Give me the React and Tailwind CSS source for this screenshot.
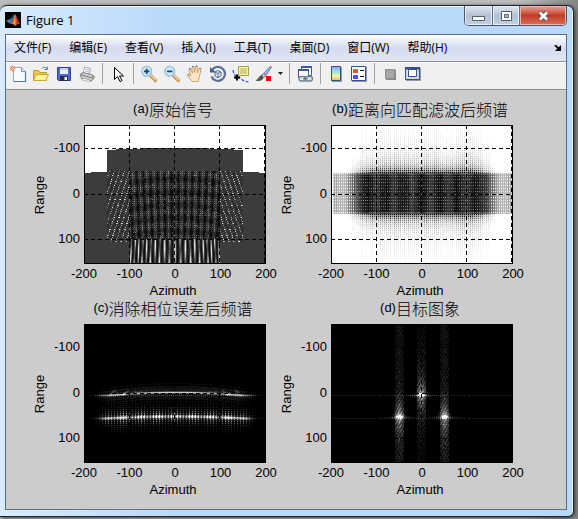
import React from 'react';

// Plot raster size
const W = 182;
const H = 139;

const noise = (x, y) => {
    const n = Math.sin(x * 12.9898 + y * 78.233) * 43758.5453;
    return n - Math.floor(n);
};

const gauss = (d, s) => Math.exp(-(d * d) / (2 * s * s));

const clamp = (v) => Math.max(0, Math.min(255, v));

// (a) raw signal: three overlapping echoes
const rawSignal = (x, y) => {
    const d = x - 90.5;
    const ad = Math.abs(d);
    const center = ad < 68;
    const inner = ad < 45;
    const top = center ? 23 + Math.round((ad * ad) / 2300) : 47 + (ad > 84 ? 1 : 0);
    if (y < top) return 255;
    if (inner && y >= 114) {
        const phase = 1.15 * ad + 0.007 * d * d - (y - 114) * 0.0022 * ad;
        const beat = 0.5 + 0.5 * Math.cos((y - 128) * 0.16 + ad * 0.7);
        const s = Math.pow(0.5 + 0.5 * Math.cos(phase), 2);
        return clamp(22 + s * (60 + 150 * beat));
    }
    if (inner && y >= 46) {
        const col = Math.cos(d * 0.92 + (y - 70) * d * 0.0012);
        const row = Math.cos((y - 60 - (d * d) / 500) * 0.48);
        const dot = x % 2 === 0 && y % 2 === 0 ? 1 : 0;
        return clamp(36 + 18 * col + 4 * row + dot * (24 + 34 * row + 24 * col) + (noise(x, y) > 0.97 ? 60 : 0));
    }
    if (center && y >= 46 && y < 117) {
        const slope = Math.cos(ad * 1.25 - y * 0.42);
        const dot = y % 2 === 0 && slope > 0.7;
        return dot ? 70 + 165 * noise(x, y) : 40 + 36 * noise(y, x) * (y % 2);
    }
    return 60;
};

// (b) spectrum after range matched filtering
const rangeFiltered = (x, y) => {
    const ad = Math.abs(x - 91);
    if (ad > 89) return 255;
    const core = ad < 62 ? 1 : Math.max(0.38, 1 - (ad - 62) / 24);
    const streak = 0.25 + 0.75 * noise(x, 3);
    if (y >= 48 && y < 89) {
        const hole = x % 2 === 0 && y % 3 === 0;
        const col = 0.82 + 0.06 * Math.cos(x * 0.35) + 0.06 * noise(x, 1);
        const shade = core * col;
        const edge = y < 50 || y > 86 ? 0.85 : 1;
        if (hole) return clamp(255 - shade * (ad > 68 ? 30 : 130 + 80 * noise(x, y)));
        return clamp(255 - 255 * shade * edge * (ad > 66 && x % 2 === 0 ? 0.75 : 1));
    }
    const dist = y < 48 ? 48 - y : y - 88;
    const side = ad < 50 ? 1 : Math.max(0, 1 - (ad - 50) / 24);
    const near = 200 * Math.exp(-dist / 4.5) * side;
    const far = 74 * Math.exp(-dist / 20) * side * streak;
    const mask = x % 2 === 0 || y % 2 === 0 ? 0.6 : 1.3;
    return clamp(255 - (near + far * (x % 2 ? 1.4 : 0.4)) * mask);
};

// (c) spectrum after phase error correction
const phaseCorrected = (x, y) => {
    const d = x - 91;
    const ad = Math.abs(d);
    const curve = (ad * ad) / 1500;
    const fade = ad < 62 ? 1 : Math.max(0, 1 - (ad - 62) / 20);
    const arc = y - (68 + Math.min(3, curve));
    const line = y - (92 + Math.min(2, curve * 0.6));
    const tail = ad < 88 && x % 2 ? 34 : 0;
    let v = (ad < 35 || ad > 50 ? 170 : 110) * gauss(arc, 0.7) * fade + 14 * gauss(arc, 4) * fade;
    v += tail * gauss(y - 71, 0.4) + tail * gauss(y - 94, 0.4);
    // side lobes
    const ripple = 0.5 + 0.5 * Math.cos(arc * 2.1 - curve * 1.4);
    v += 28 * gauss(arc, 6) * ripple * fade * (x % 2 ? 1 : 0.3);
    if (ad > 28 && ad < 68) v += 65 * gauss(arc + 2 + Math.cos(ad * 0.42) * 2, 0.9) * (0.5 + 0.5 * Math.cos(ad * 0.5));
    // vertical comb around the lower echo
    const comb = x % 3 === 0 ? 1 : 0.2;
    const lump = 0.55 + 0.45 * Math.cos(ad * 0.36);
    v += (120 + 100 * lump) * gauss(line, 0.9) * fade * (x % 3 === 1 && ad < 50 ? 0.55 : 1);
    v += 140 * gauss(line, 4) * comb * fade * (0.35 + 0.65 * lump) * (y % 2 ? 1 : 0.75);
    v += 75 * gauss(line, 8) * comb * fade * (0.4 + 0.6 * noise(x, 9)) * (y % 2);
    return clamp(v);
};

// (d) focused target image
const targets = [
    { x: 68, y: 92, up: 16, down: 26, floor: 32, power: 125 },
    { x: 90, y: 70, up: 24, down: 22, floor: 12, power: 125 },
    { x: 113, y: 92, up: 16, down: 26, floor: 32, power: 125 },
];

const focusedImage = (x, y) => {
    let v = 0;
    targets.forEach((t) => {
        const dx = Math.abs(x - t.x);
        const dy = y - t.y;
        const decay = Math.exp(-Math.abs(dy) / (dy < 0 ? t.up : t.down));
        if (dx < 5) {
            const weave = 0.3 + 0.7 * (0.5 + 0.5 * Math.cos((x - t.x) * 2.1 + dy * 1.1));
            v += (t.floor + t.power * decay) * weave * (0.3 + 0.9 * noise(x, y)) * (1 - dx / 10);
        }
        v += 60 * gauss(dx, 2.5) * gauss(dy, 9);
        v += 170 * gauss(dx, 2) * gauss(dy, 1) + 45 * gauss(dx, 4) * gauss(dy, 2.5);
        v += 120 * Math.exp(-dx / 7) * gauss(dy - 1, 0.7) * (x % 2 ? 1 : 0.5);
    });
    if ((y === 71 || y === 94) && x % 2) v += 40;
    return clamp(v);
};

// Horizontal runs of equal grey are merged into one path per level
const rasterize = (fn, base) => {
    const step = 15;
    const levels = {};
    for (let y = 0; y < H; y++) {
        let x = 0;
        while (x < W) {
            const g = Math.round(fn(x, y) / step) * step;
            let run = 1;
            while (x + run < W && Math.round(fn(x + run, y) / step) * step === g) run++;
            if (g !== base) levels[g] = (levels[g] || '') + `M${x} ${y}h${run}v1h-${run}z`;
            x += run;
        }
    }
    return Object.entries(levels);
};

const plots = [
    { id: 'a', title: '原始信号', base: 255, data: rasterize(rawSignal, 255) },
    { id: 'b', title: '距离向匹配滤波后频谱', base: 255, data: rasterize(rangeFiltered, 255) },
    { id: 'c', title: '消除相位误差后频谱', base: 0, data: rasterize(phaseCorrected, 0) },
    { id: 'd', title: '目标图象', base: 0, data: rasterize(focusedImage, 0) },
];

const Plot = ({ plot }) => (
    <figure className="grid grid-cols-[12px_38px_1fr] grid-rows-[25px_auto_20px_15px] text-[13px] leading-[14px] text-black">
        <figcaption className="col-start-3 flex h-[18px] items-center justify-center whitespace-nowrap pr-1">
            <span>({plot.id})</span>
            <span className="font-['Noto_Sans_CJK_SC',sans-serif] text-base font-light leading-[18px]">{plot.title}</span>
        </figcaption>
        <div className="col-start-1 row-start-2 flex items-center justify-center">
            <span className="-rotate-90">Range</span>
        </div>
        <div className="col-start-2 row-start-2 flex flex-col justify-between pr-1 pt-[23px] pb-[25px] text-right">
            {['-100', '0', '100'].map((t) => (
                <span key={t} className="flex h-0 items-center justify-end">{t}</span>
            ))}
        </div>
        <svg viewBox="0 0 182 139" className="col-start-3 row-start-2 block w-full" shapeRendering="crispEdges">
            <rect width="182" height="139" fill={plot.base ? '#fff' : '#000'} />
            {plot.data.map(([g, d]) => (
                <path key={g} d={d} fill={`rgb(${g},${g},${g})`} />
            ))}
            <path
                d="M45.5 0V139M90.5 0V139M135.5 0V139M180.5 0V139M0 23.5H182M0 69.5H182M0 114.5H182"
                stroke="#000"
                strokeDasharray="4 3"
                fill="none"
            />
            <rect x="0.5" y="0.5" width="181" height="138" fill="none" stroke="#000" />
        </svg>
        <div className="col-start-3 row-start-3 flex items-center justify-between">
            {['-200', '-100', '0', '100', '200'].map((t) => (
                <span key={t} className="flex w-0 justify-center">{t}</span>
            ))}
        </div>
        <div className="col-start-3 row-start-4 flex items-start justify-center pr-1">Azimuth</div>
    </figure>
);

const Icon = ({ children }) => (
    <svg viewBox="0 0 18 18" className="h-[18px] w-[18px]" fill="none">{children}</svg>
);

const Lens = ({ plus }) => (
    <Icon>
        <path d="M10.5 10.5l5 5" stroke="#c98a42" strokeWidth="3.2" strokeLinecap="round" />
        <path d="M10.8 10.2l4.8 4.8" stroke="#f9d6a4" strokeWidth="1.5" strokeLinecap="round" />
        <circle cx="6.7" cy="6.3" r="4.9" fill="#c9ecfb" stroke="#9dbde0" strokeWidth="1.4" />
        <path d={plus ? 'M4 6.4h5.4M6.7 3.7v5.4' : 'M4 6.4h5.4'} stroke="#16457f" strokeWidth="1.7" />
    </Icon>
);

const icons = {
    new: (
        <Icon>
            <path d="M4.5 2.5h8l4 4v10h-12z" fill="#f5faff" stroke="#8fabd0" />
            <path d="M16.5 6.5v10h-12" stroke="#54779f" strokeWidth="1.2" />
            <path d="M12.5 2.5v4h4" fill="#cfe0f3" stroke="#7f9cc4" />
            <path d="M3.5 .5v6M.5 3.5h6M1.3 1.3l4.4 4.4M5.7 1.3L1.3 5.7" stroke="#e8957a" />
            <circle cx="3.5" cy="3.5" r="1.6" fill="#fff0b0" stroke="#dc6a46" />
        </Icon>
    ),
    open: (
        <Icon>
            <path d="M10 3.5c1.5-2 4-1.5 5 .5M15.4 1.6v2.9h-2.9" stroke="#5578aa" />
            <path d="M1.5 15.5v-10h5l1.5 2h6.5v8z" fill="#ecc654" stroke="#c39a34" />
            <path d="M1.5 15.5l3-6h12l-2.5 6z" fill="#fff19a" stroke="#cda63a" />
        </Icon>
    ),
    save: (
        <Icon>
            <path d="M2.5 2.5h13v13h-12l-1-1z" fill="#5468c6" stroke="#2e4190" />
            <path d="M5 3h8v6H5z" fill="#e8effc" />
            <path d="M5 3h8v2H5z" fill="#c3d0f2" />
            <path d="M5 11h8v5H5z" fill="#262c54" />
            <path d="M9.5 12h2.5v3H9.5z" fill="#f4f6ff" />
        </Icon>
    ),
    print: (
        <Icon>
            <path d="M5 8l1.5-6 6 1.5L11.5 9z" fill="#fafcff" stroke="#a4abb8" />
            <path d="M7.5 4l4 1M7 6l4 1" stroke="#a8bad4" />
            <path d="M2 9.5l3-2 10 2.5 1.5 2.5-3 3.5-10-2.5z" fill="#d0d0d0" stroke="#8a8a8a" />
            <path d="M2 9.5l10.5 3 4-1M3 13l10 3" stroke="#777" />
            <path d="M5 13l7 2-1.5 1.5-6.5-1.5z" fill="#f8f8f8" stroke="#999" strokeWidth=".7" />
            <path d="M13.5 13.5l1.5-.5" stroke="#79ae54" strokeWidth="1.4" />
        </Icon>
    ),
    pointer: (
        <Icon>
            <path d="M5.5 2.5v12l3-3 2.5 5 2-1-2.5-4.5h4z" fill="#fff" stroke="#000" />
        </Icon>
    ),
    zoomIn: <Lens plus />,
    zoomOut: <Lens />,
    pan: (
        <Icon>
            <path
                d="M6 16.5c-1-2-3.5-4-4.5-6 .3-1.3 2-.8 3.2.8L3 5c0-1.5 1.6-1.5 2-.2l1.4 3.4L6 2.5c0-1.5 1.8-1.5 2 0l.8 5 .7-5.7c.3-1.3 2-1 2 .3l-.3 5.900 2-4.200c.7-1.200 2-.6 1.700.8l-1.400 6.400c-.3 2-1 3.500-1.500 5.500z"
                fill="#ffe6c6"
                stroke="#c99f72"
            />
            <path d="M3.2 4.2c.3-.9 1.3-.8 1.7.2M6.2 2c.4-.9 1.4-.9 1.7 0M9.7 1.6c.3-.7 1.4-.7 1.6 0M13.3 3.6c.7-.7 1.5-.3 1.5.5M1.5 10.2c.2-.8 1-.8 1.8-.3" stroke="#3e6094" />
        </Icon>
    ),
    rotate: (
        <Icon>
            <path d="M3.5 4.5a7 7 0 1 1-1 7" stroke="#5a7098" strokeWidth="2.2" />
            <path d="M1 2v5.5h6z" fill="#465f87" />
            <path d="M6 7l3-1.5L12 7v4l-3 1.8L6 11zM6 7l3 1.5L12 7M9 8.5v4.3" fill="#e6eef8" stroke="#4c6a96" />
        </Icon>
    ),
    dataCursor: (
        <Icon>
            <path d="M1 5c1 5 2 6 5 7s5 5 11 5" stroke="#2f3cf0" strokeWidth="1.2" strokeDasharray="3 1.5" />
            <path d="M6.5 1.5h10v9h-10z" fill="#f7f4a8" stroke="#a8a24a" />
            <path d="M8 4h7M8 6h7M8 8h7" stroke="#b3ac58" />
            <path d="M5 9.5v6M2 12.5h6" stroke="#000" strokeWidth="2" />
        </Icon>
    ),
    brush: (
        <Icon>
            <path d="M8.5 8.5L15 1.5l1.5.5-5.5 8.5z" fill="#a3b5df" stroke="#6a7cb0" />
            <path d="M8 8.5l3 2.5-2 1.5-2.5-2z" fill="#ddd" stroke="#666" strokeWidth=".8" />
            <path d="M7 10c-3 0-3 4-6.5 5.5 4 1.5 7.5 0 8-3z" fill="#5a5455" />
            <path d="M11 11h5v5h-5z" fill="#f00" />
        </Icon>
    ),
    link: (
        <Icon>
            <path d="M5.5 1.5h10v9h-10z" fill="#fff" stroke="#3c5c96" />
            <path d="M5 1h11v2H5z" fill="#3c5c96" />
            <path d="M2.5 4.5h10v8h-10z" fill="#fff" stroke="#3c5c96" />
            <path d="M2 4h11v2H2z" fill="#3c5c96" />
            <rect x="3" y="11.5" width="7" height="4.5" rx="2.2" fill="#e0e7ee" stroke="#6e8494" strokeWidth="1.3" />
            <rect x="9" y="11.5" width="7.5" height="4.5" rx="2.2" fill="#e0e7ee" stroke="#6e8494" strokeWidth="1.3" />
            <path d="M7 13.8h5" stroke="#3e5262" />
        </Icon>
    ),
    colorbar: (
        <Icon>
            <defs>
                <linearGradient id="bar" x2="0" y2="1">
                    <stop stopColor="#a59af0" />
                    <stop offset=".35" stopColor="#8fe4f2" />
                    <stop offset=".7" stopColor="#f5f2a0" />
                    <stop offset="1" stopColor="#f8a48a" />
                </linearGradient>
            </defs>
            <path d="M5 2h10v15H5z" fill="#8f99ab" />
            <path d="M4.5 1.5h9v14h-9z" fill="url(#bar)" stroke="#344f85" />
        </Icon>
    ),
    legend: (
        <Icon>
            <path d="M2 2h15v15H2z" fill="#8f99ab" />
            <path d="M1.5 1.5h14v14h-14z" fill="#fff" stroke="#344f85" />
            <path d="M3 4h5v4H3z" fill="#e8504e" />
            <path d="M3 10h5v4H3z" fill="#5151e6" />
            <path d="M10 5.5h4M10 11.5h4" stroke="#111" />
        </Icon>
    ),
    hideTools: (
        <Icon>
            <path d="M5 5h10v10H5z" fill="#8a8a8a" />
            <path d="M4.5 4.5h9v9h-9z" fill="#a7a7a7" stroke="#8d8d8d" />
        </Icon>
    ),
    dockTools: (
        <Icon>
            <path d="M2 3h15v13H2z" fill="#8f99ab" />
            <path d="M1.5 2.5h14v12h-14z" fill="#d5dbe5" stroke="#344f85" />
            <path d="M1 2h15v2.5H1z" fill="#344f85" />
            <path d="M4.5 4.5h8v7h-8z" fill="#fff" stroke="#344f85" />
        </Icon>
    ),
};

const menus = ['文件(F)', '编辑(E)', '查看(V)', '插入(I)', '工具(T)', '桌面(D)', '窗口(W)', '帮助(H)'];

const toolGroups = [
    ['new', 'open', 'save', 'print'],
    ['pointer'],
    ['zoomIn', 'zoomOut', 'pan', 'rotate', 'dataCursor', 'brush', 'caret'],
    ['link'],
    ['colorbar', 'legend'],
    ['hideTools', 'dockTools'],
];

const Toolbar = () => (
    <div className="flex h-7 items-center border-t border-[#8f929c] bg-[#f0f0f0] pb-1 shadow-[inset_0_1px_0_#fff]">
        {toolGroups.map((group, i) => (
            <React.Fragment key={group[0]}>
                {i > 0 && (
                    <span className="flex w-2 justify-center">
                        <span className="h-[21px] w-px bg-[#a0a0a0]" />
                    </span>
                )}
                {group.map((name) =>
                    name === 'caret' ? (
                        <button key={name} type="button" aria-label={name} className="flex w-2.5 justify-center">
                            <svg viewBox="0 0 5 3" className="h-[3px] w-[5px]"><path d="M0 0h5L2.5 3z" fill="#222" /></svg>
                        </button>
                    ) : (
                        <button key={name} type="button" aria-label={name} className="flex h-6 w-[23px] items-center justify-center">
                            {icons[name]}
                        </button>
                    )
                )}
            </React.Fragment>
        ))}
    </div>
);

const WindowButtons = () => (
    <div className="flex h-5 overflow-hidden rounded-b-[5px] border border-t-0 border-[#4b5668]">
        <button type="button" aria-label="Minimize" className="flex w-7 items-center justify-center border-r border-[#5f6c80] bg-linear-to-b from-[#dfe8f2] via-[#b3c1d2] via-50% to-[#c0d2e6] shadow-[inset_0_0_0_1px_#e8f0f8]">
            <svg viewBox="0 0 13 12" className="h-3 w-[13px]"><path d="M.5 6.5h12v4H.5z" fill="#fff" stroke="#555e6c" /></svg>
        </button>
        <button type="button" aria-label="Maximize" className="flex w-[27px] items-center justify-center border-r border-[#5f6c80] bg-linear-to-b from-[#dfe8f2] via-[#b3c1d2] via-50% to-[#c0d2e6] shadow-[inset_0_0_0_1px_#e8f0f8]">
            <svg viewBox="0 0 13 12" className="h-3 w-[13px]">
                <path d="M1.5 1.5h10v9h-10z" fill="#fff" stroke="#555e6c" />
                <path d="M4.5 4.5h4v3h-4z" fill="#b3c1d2" stroke="#555e6c" />
            </svg>
        </button>
        <button type="button" aria-label="Close" className="flex w-[46px] items-center justify-center bg-linear-to-b from-[#e5a799] via-[#c13a25] via-50% to-[#d9705c] shadow-[inset_0_0_0_1px_#eab5a8]">
            <svg viewBox="0 0 13 12" className="h-3 w-[13px]">
                <path d="M3 2.5l7 7M10 2.5l-7 7" stroke="#5c4a55" strokeWidth="4.8" />
                <path d="M3 2.5l7 7M10 2.5l-7 7" stroke="#fff" strokeWidth="3" />
            </svg>
        </button>
    </div>
);

const TitleBar = () => (
    <header className="flex h-7 items-start justify-between">
        <div className="flex items-center gap-[5px] pt-[5px]">
            <svg viewBox="0 0 16 16" className="h-4 w-4">
                <path d="M0 0h16v16H0z" fill="#000" />
                <path d="M1 9l4-2 2 2-3 2z" fill="#4b91bd" />
                <path d="M5 7c2 0 3-4 5-5L7 10.5 5 12l-1-1z" fill="#397a9c" />
                <path d="M10 2c2 2 3 8 5.5 10.5-2-1-3-1-5 1.5C9 12.5 8 12 5 12c3-2 3.5-7 5-10z" fill="#c9401c" />
                <path d="M10 2c.8 3 .6 7 .5 12-1-1.5-2-2.5-3.5-2.5C9 9 9.3 5 10 2z" fill="#f59a3c" />
            </svg>
            <h1 className="text-[13px] leading-[18px] text-black">Figure 1</h1>
        </div>
        <WindowButtons />
    </header>
);

const MenuBar = () => (
    <nav className="flex h-[26px] items-center justify-between bg-linear-to-b from-white via-[#d5dbef] via-50% to-[#e1e6f6] pl-2 pr-[5px]">
        <div className="flex gap-[18px]">
            {menus.map((m) => (
                <button key={m} type="button" className="whitespace-nowrap text-xs text-black">{m}</button>
            ))}
        </div>
        <svg viewBox="0 0 7 6" className="h-1.5 w-[7px]">
            <path d="M1 0l4 4" stroke="#000" strokeWidth="1.8" />
            <path d="M7 0v6H1z" fill="#000" />
        </svg>
    </nav>
);

const App = () => (
    <div className="bg-linear-to-r from-[#bdbdbd] from-90% to-[#858585] pr-1 pt-[5px] pb-0.5 font-['Liberation_Sans',sans-serif]">
        <div className="rounded-t-[7px] rounded-br-[6px] border border-l-0 border-[#20242e] bg-linear-to-r from-[#d9ebfd] to-[#b9d9fb] to-30% shadow-[inset_0_1px_0_#eef7ff,inset_-1px_0_0_#e4f4ff,1px_1px_4px_#333]">
            <div className="pl-[5px] pr-1.5 pb-1.5 font-['Open_Sans','Noto_Sans_CJK_SC',sans-serif]">
                <TitleBar />
                <main className="border border-[#5b6b80] border-b-[#6a7078] bg-[#cccccc]">
                    <MenuBar />
                    <Toolbar />
                    <section className="grid grid-cols-2 gap-x-[15px] border-t border-[#8f8f8f] bg-[#cccccc] pl-7 pr-[53px] pt-[10px] pb-[11px] font-['Liberation_Sans',sans-serif]">
                        {plots.map((p) => (
                            <Plot key={p.id} plot={p} />
                        ))}
                    </section>
                </main>
            </div>
        </div>
    </div>
);

export default App;
